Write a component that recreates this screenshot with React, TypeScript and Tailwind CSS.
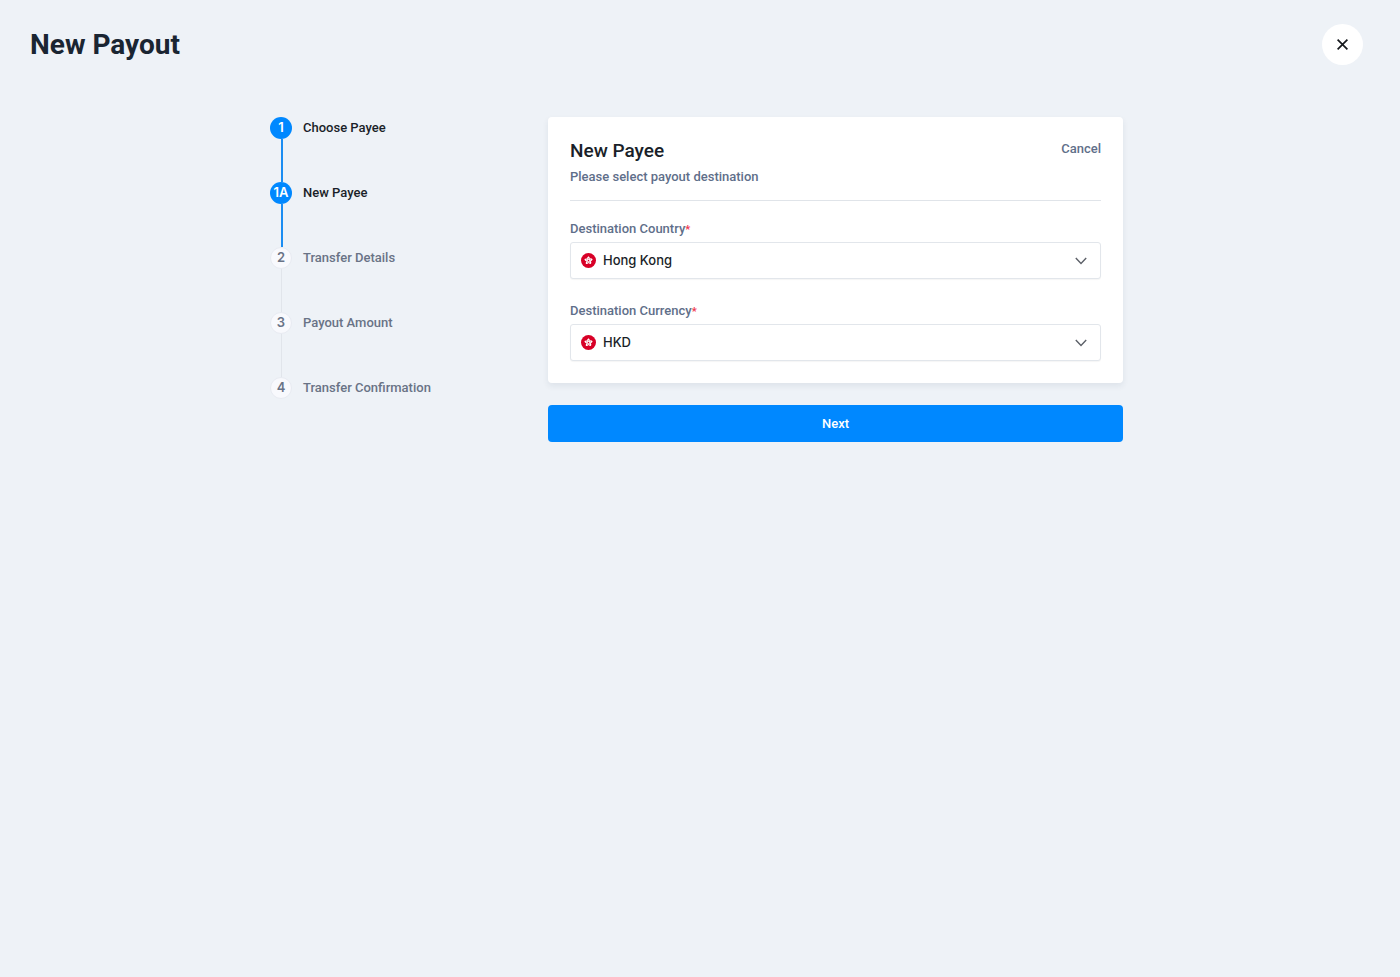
import { useState } from "react";

type StepState = "done" | "pending";

const steps: { badge: string; label: string; state: StepState }[] = [
  { badge: "1", label: "Choose Payee", state: "done" },
  { badge: "1A", label: "New Payee", state: "done" },
  { badge: "2", label: "Transfer Details", state: "pending" },
  { badge: "3", label: "Payout Amount", state: "pending" },
  { badge: "4", label: "Transfer Confirmation", state: "pending" },
];

function Stepper() {
  return (
    <nav aria-label="Payout steps" className="w-[278px] shrink-0">
      <ol className="flex flex-col">
        {steps.map((step, i) => {
          const done = step.state === "done";
          const last = i === steps.length - 1;
          return (
            <li key={step.badge} className="flex gap-[11px]">
              <div className="flex flex-col items-center">
                <span
                  className={
                    done
                      ? "flex size-[22px] items-center justify-center rounded-full bg-[#0088ff] font-['Inter',sans-serif] text-[13px] font-semibold text-white"
                      : "flex size-[22px] items-center justify-center rounded-full border border-[#e8ebf2] bg-[#f8f9fd] font-['Inter',sans-serif] text-[13px] font-semibold text-[#697386]"
                  }
                >
                  {step.badge}
                </span>
                {!last && (
                  <span
                    className={
                      done
                        ? "ml-px h-[43px] w-[2px] bg-[#1b8df2]"
                        : "ml-px h-[43px] w-px bg-[#e1e5eb]"
                    }
                  />
                )}
              </div>
              <span
                className={
                  done
                    ? "text-[13px] leading-[22px] font-medium text-[#1a1f29]"
                    : "text-[13px] leading-[22px] font-medium text-[#697386]"
                }
              >
                {step.label}
              </span>
            </li>
          );
        })}
      </ol>
    </nav>
  );
}

function HongKongFlag() {
  return (
    <svg
      aria-hidden="true"
      viewBox="0 0 30 30"
      className="pointer-events-none absolute top-[11px] left-[11px] size-[15px]"
    >
      <circle cx="15" cy="15" r="15" fill="#d80027" />
      {[0, 72, 144, 216, 288].map((angle) => (
        <g key={angle} transform={`rotate(${angle} 15 15)`}>
          <path d="M15 14.6C11.2 12.8 11 8.6 15.2 6.4C18.4 8.8 18.6 12.4 15 14.6Z" fill="#fff" />
          <circle cx="15" cy="11.2" r="0.9" fill="#d80027" />
        </g>
      ))}
      <circle cx="15" cy="15" r="1.5" fill="#d80027" />
    </svg>
  );
}

function SelectField({
  id,
  label,
  options,
}: {
  id: string;
  label: string;
  options: string[];
}) {
  const [value, setValue] = useState(options[0]);
  return (
    <div>
      <label htmlFor={id} className="block text-[13px] leading-5 font-medium text-[#5f6f8a]">
        {label}
        <span className="text-[11px] leading-none font-bold text-[#f0384f]">*</span>
      </label>
      <div className="relative mt-[3px]">
        <HongKongFlag />
        <select
          id={id}
          value={value}
          onChange={(e) => setValue(e.target.value)}
          className="block h-[37px] w-full appearance-none rounded-[3px] border border-[#e2e6eb] bg-white pr-10 pl-8 font-['Inter',sans-serif] text-[13px] font-medium text-[#1a1f29] shadow-[0_1px_1px_rgba(0,0,0,0.04)]"
        >
          {options.map((option) => (
            <option key={option}>{option}</option>
          ))}
        </select>
        <svg
          aria-hidden="true"
          viewBox="0 0 12 8"
          className="pointer-events-none absolute top-[15px] right-[14px] h-2 w-3"
          fill="none"
          stroke="#5c6068"
          strokeWidth="1.4"
        >
          <path d="M0.8 1L6 6.4L11.2 1" />
        </svg>
      </div>
    </div>
  );
}

export default function App() {
  return (
    <div className="min-h-screen bg-[#eef2f7] pr-[7px] font-['Roboto',sans-serif] text-[#1a2532]">
      <header className="flex items-center justify-between px-[30px] pt-6">
        <h1 className="text-[28px] leading-10 font-bold">New Payout</h1>
        <button
          type="button"
          aria-label="Close"
          className="flex size-[41px] items-center justify-center rounded-full bg-white text-[#15181c]"
        >
          <svg viewBox="0 0 11 11" className="size-[11px]" fill="none" stroke="currentColor" strokeWidth="1.7">
            <path d="M0.6 0.6L10.4 10.4M10.4 0.6L0.6 10.4" />
          </svg>
        </button>
      </header>

      <main className="mx-auto flex max-w-[853px] pt-[52px]">
        <Stepper />
        <form className="min-w-0 flex-1" onSubmit={(e) => e.preventDefault()}>
          <section className="rounded-[4px] bg-white p-[22px] shadow-[0_3px_6px_rgba(30,50,80,0.08)]">
            <div className="flex items-start justify-between border-b border-[#e0e4e9] pb-[13px]">
              <div>
                <h2 className="text-[19px] leading-6 font-medium text-[#1a1f29]">New Payee</h2>
                <p className="mt-1 text-[13px] leading-5 font-medium text-[#5f6f8a]">
                  Please select payout destination
                </p>
              </div>
              <button type="button" className="text-[13px] leading-5 font-medium text-[#5f6f8a]">
                Cancel
              </button>
            </div>
            <div className="mt-[18px] flex flex-col gap-[22px]">
              <SelectField id="country" label="Destination Country" options={["Hong Kong"]} />
              <SelectField id="currency" label="Destination Currency" options={["HKD"]} />
            </div>
          </section>
          <button
            type="submit"
            className="mt-[22px] block h-[37px] w-full rounded-[4px] bg-[#0088ff] text-[13px] font-medium text-white"
          >
            Next
          </button>
        </form>
      </main>
    </div>
  );
}
